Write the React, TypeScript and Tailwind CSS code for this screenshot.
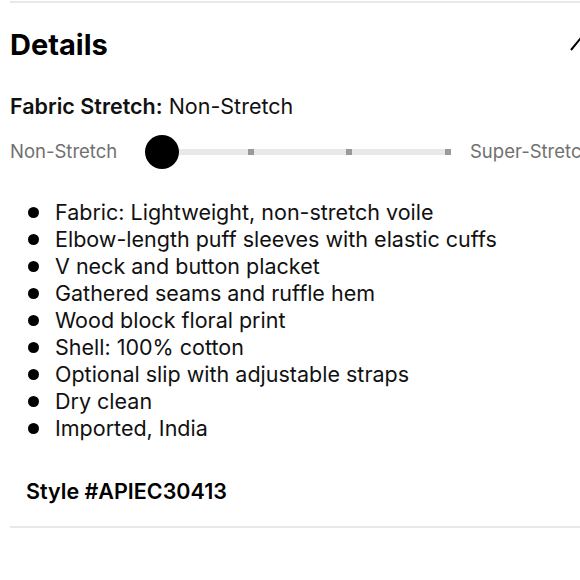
import React from "react";

const items = [
  "Fabric: Lightweight, non-stretch voile",
  "Elbow-length puff sleeves with elastic cuffs",
  "V neck and button placket",
  "Gathered seams and ruffle hem",
  "Wood block floral print",
  "Shell: 100% cotton",
  "Optional slip with adjustable straps",
  "Dry clean",
  "Imported, India",
];

export default function App() {
  return (
    <div className="w-[580px] h-[580px] overflow-hidden bg-white" style={{ fontFamily: 'Inter, "Liberation Sans", Arial, sans-serif' }}>
      <div className="w-[600px] pl-[10px] pr-[10px]">
        <div className="border-t-2 border-[#e8e8e8] mt-[1px]">
          <div className="flex items-center justify-between pt-[23px] h-[60px]">
            <h2 className="text-[29px] font-bold text-black leading-none">Details</h2>
            <svg width="20" height="14" viewBox="0 0 20 14" className="mr-[0px] -mt-[2px]">
              <path d="M1 13 L10 2 L19 13" fill="none" stroke="#000" strokeWidth="2" />
            </svg>
          </div>
          <div className="mt-[31px] text-[21.5px] leading-[24px] text-[#111]">
            <span className="font-semibold">Fabric Stretch:</span> Non-Stretch
          </div>
          <div className="flex items-center mt-[17px] h-[34px]">
            <span className="text-[18.5px] text-[#707070] w-[135px] shrink-0">Non-Stretch</span>
            <div className="relative w-[306px] h-[34px] shrink-0">
              <div className="absolute left-[16px] right-[6px] top-[14px] h-[6px] bg-[#e8e8e8]" />
              <div className="absolute left-[103px] top-[14px] w-[6px] h-[6px] bg-[#9a9a9a]" />
              <div className="absolute left-[201px] top-[14px] w-[6px] h-[6px] bg-[#9a9a9a]" />
              <div className="absolute left-[300px] top-[14px] w-[6px] h-[6px] bg-[#9a9a9a]" />
              <div className="absolute left-0 top-0 w-[34px] h-[34px] rounded-full bg-black" />
            </div>
            <span className="text-[18.5px] text-[#707070] ml-[19px] whitespace-nowrap">Super-Stretch</span>
          </div>
          <ul className="mt-[30px] text-[21.5px] leading-[27px] text-[#111]">
            {items.map((t) => (
              <li key={t} className="flex items-center">
                <span className="w-[11px] h-[11px] rounded-full bg-black ml-[18px] mr-[16px] shrink-0" />
                <span className="whitespace-nowrap">{t}</span>
              </li>
            ))}
          </ul>
          <div className="mt-[37px] pl-[16px] text-[21.5px] font-semibold text-black leading-[24px]">Style #APIEC30413</div>
          <div className="mt-[23px] border-t-2 border-[#e8e8e8]" />
        </div>
      </div>
    </div>
  );
}
